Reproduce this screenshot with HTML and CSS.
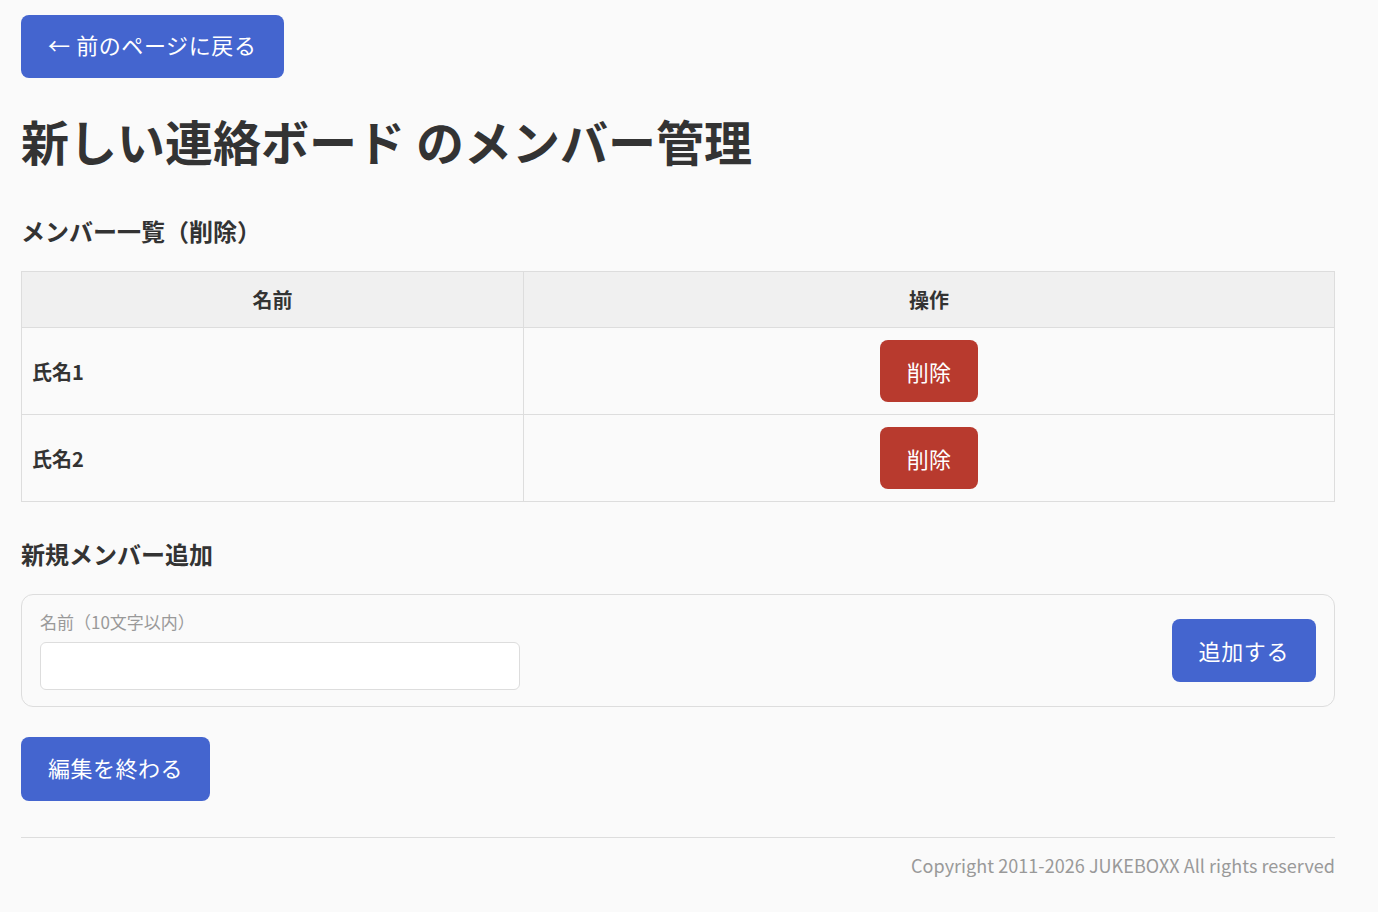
FILE: index.html
```html
<!DOCTYPE html>
<html lang="ja">
<head>
    <meta charset="UTF-8">
    <meta name="viewport" content="width=device-width, initial-scale=1.0">
    <title>新しい連絡ボード のメンバー管理</title>
    <link rel="stylesheet" href="styles.css">
</head>
<body>
    <div class="page">
        <a class="btn btn-primary back" href="#">← 前のページに戻る</a>

        <h1>新しい連絡ボード のメンバー管理</h1>

        <h2>メンバー一覧（削除）</h2>
        <table class="member-table">
            <thead>
                <tr>
                    <th class="col-name">名前</th>
                    <th>操作</th>
                </tr>
            </thead>
            <tbody>
                <tr>
                    <td class="name">氏名1</td>
                    <td class="action"><button class="btn btn-danger">削除</button></td>
                </tr>
                <tr>
                    <td class="name">氏名2</td>
                    <td class="action"><button class="btn btn-danger">削除</button></td>
                </tr>
            </tbody>
        </table>

        <h2 class="add-title">新規メンバー追加</h2>
        <form class="add-form" onsubmit="return false;">
            <label class="field">
                <span class="field-label">名前（10文字以内）</span>
                <input type="text" maxlength="10">
            </label>
            <button class="btn btn-primary" type="submit">追加する</button>
        </form>

        <a class="btn btn-primary finish" href="#">編集を終わる</a>

        <footer class="footer">
            Copyright 2011-2026 JUKEBOXX All rights reserved
        </footer>
    </div>
</body>
</html>
```

FILE: styles.css
```css
body {
    margin: 0;
    background-color: #fafafa;
    color: #333;
    font-family: "Noto Sans CJK JP", "Noto Sans", sans-serif;
}

.page {
    width: 1314px;
    padding: 15px 0 20px 21px;
}

.btn {
    display: inline-block;
    border: none;
    border-radius: 8px;
    padding: 15px 27px;
    font-family: inherit;
    font-size: 22px;
    line-height: 33px;
    letter-spacing: 0.6px;
    color: white;
    text-decoration: none;
    cursor: pointer;
}

.btn-primary {
    background-color: #4465cf;
}

.back {
    padding: 13px 27px 17px;
}

.btn-danger {
    background-color: #b83a2e;
    line-height: 32px;
    letter-spacing: 0.3px;
}

h1 {
    margin: 33px 0 0;
    font-size: 48px;
    line-height: 58px;
    font-weight: bold;
}

h2 {
    margin: 47px 0 26px;
    font-size: 24px;
    line-height: 29px;
    font-weight: bold;
}

.member-table {
    width: 100%;
    border-collapse: collapse;
    font-size: 20px;
}

.member-table th,
.member-table td {
    border: 1px solid #ddd;
}

.member-table th {
    background-color: #f0f0f0;
    height: 55px;
    padding: 0 10px;
    font-weight: bold;
}

.member-table .col-name {
    width: 481px;
}

.member-table td {
    padding: 12px 10px;
    height: 62px;
}

.member-table .name {
    font-weight: bold;
}

.member-table .action {
    text-align: center;
}

.add-title {
    margin: 37px 0 26px;
}

.add-form {
    display: flex;
    align-items: center;
    justify-content: space-between;
    border: 1px solid #ddd;
    border-radius: 12px;
    padding: 16px 18px 16px;
}

.field {
    display: flex;
    flex-direction: column;
    gap: 9px;
}

.field-label {
    font-size: 17px;
    line-height: 22px;
    color: #999;
}

.field input {
    width: 480px;
    height: 48px;
    box-sizing: border-box;
    border: 1px solid #ddd;
    border-radius: 6px;
    background: white;
    font-size: 18px;
    padding: 0 10px;
}

.finish {
    margin-top: 30px;
    padding: 13px 27px 17px;
    line-height: 34px;
    letter-spacing: 0.5px;
}

.footer {
    margin-top: 36px;
    border-top: 1px solid #ddd;
    padding-top: 14px;
    text-align: right;
    font-size: 18px;
    letter-spacing: 0.05px;
    color: #999;
}
```
